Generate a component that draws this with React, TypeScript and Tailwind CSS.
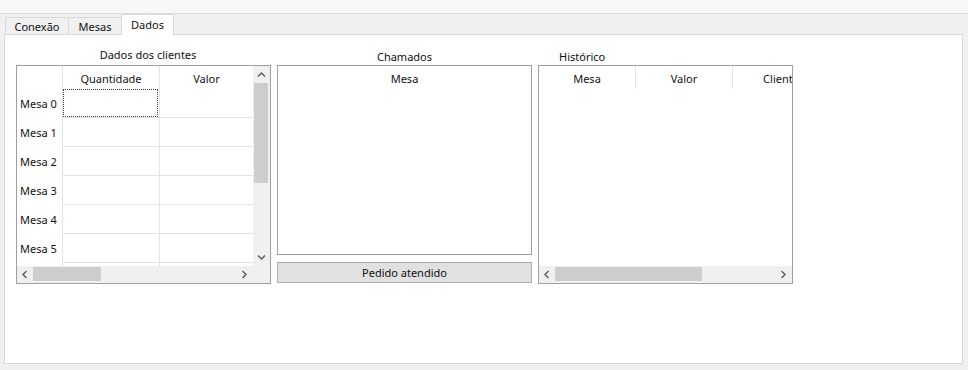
import React from "react";

const Chev = ({ dir }: { dir: "up" | "down" | "left" | "right" }) => {
  const pts: Record<string, string> = {
    up: "1,5.5 4.5,2 8,5.5",
    down: "1,2.5 4.5,6 8,2.5",
    left: "5.5,1 2,4.5 5.5,8",
    right: "2.5,1 6,4.5 2.5,8",
  };
  return (
    <svg width="9" height="9" viewBox="0 0 9 9">
      <polyline points={pts[dir]} fill="none" stroke="#5a5a5a" strokeWidth="1.4" />
    </svg>
  );
};

const HScroll = ({ thumbLeft, thumbWidth }: { thumbLeft: number; thumbWidth: number }) => (
  <div className="relative h-[17px] flex-1 bg-[#f0f0f0] flex items-center justify-between">
    <div className="w-[17px] h-[17px] flex items-center justify-center">
      <Chev dir="left" />
    </div>
    <div
      className="absolute top-[1px] bottom-[2px] bg-[#cdcdcd]"
      style={{ left: thumbLeft, width: thumbWidth }}
    />
    <div className="w-[17px] h-[17px] flex items-center justify-center">
      <Chev dir="right" />
    </div>
  </div>
);

const rows = ["Mesa 0", "Mesa 1", "Mesa 2", "Mesa 3", "Mesa 4", "Mesa 5", "Mesa 6"];

export default function App() {
  return (
    <div className="w-[968px] h-[370px] bg-[#f0f0f0] overflow-hidden text-[11px] text-[#111] font-['Noto_Sans',sans-serif] leading-none">
      {/* top strip */}
      <div className="h-[14px] bg-[#f7f7f7] border-b border-[#dcdcdc]" />
      {/* tabs */}
      <div className="h-[20px] flex items-end pl-[5px]">
        <div className="w-[64px] h-[17px] border-l border-t border-r border-[#d9d9d9] bg-[#f0f0f0] flex items-center justify-center pt-[1px]">
          Conexão
        </div>
        <div className="w-[53px] h-[17px] border-t border-r border-[#d9d9d9] bg-[#f0f0f0] flex items-center justify-center pt-[1px]">
          Mesas
        </div>
        <div className="relative z-10 -ml-px -mb-px w-[53px] h-[21px] border-l border-t border-r border-[#d9d9d9] bg-white flex items-center justify-center pb-[2px]">
          Dados
        </div>
      </div>
      {/* panel */}
      <div className="ml-[4px] w-[959px] h-[330px] bg-white border border-[#d9d9d9] pl-[11px] pt-[11px] flex gap-[6px] items-start">
        {/* left group */}
        <div className="w-[255px] flex flex-col">
          <div className="h-[19px] flex items-center justify-center pl-[9px] pb-[2px]">Dados dos clientes</div>
          <div className="h-[219px] border border-[#a0a0a0] flex flex-col">
            <div className="h-[200px] flex">
              <div className="w-[236px] h-[200px] overflow-hidden flex flex-col">
                <div className="h-[23px] shrink-0 flex">
                  <div className="w-[46px] border-r border-[#e3e3e3]" />
                  <div className="w-[97px] border-r border-[#e3e3e3] flex items-center justify-center pt-[1px]">Quantidade</div>
                  <div className="flex-1 flex items-center justify-center pt-[1px]">Valor</div>
                </div>
                {rows.map((r, i) => (
                  <div key={r} className="h-[29px] shrink-0 flex">
                    <div className="w-[46px] border-r border-[#e3e3e3] flex items-center pl-[3px]">{r}</div>
                    <div className="relative w-[97px] border-r border-b border-[#e3e3e3]">
                      {i === 0 && (
                        <div className="absolute left-0 top-0 right-[1px] bottom-0 border border-dotted border-[#404040]" />
                      )}
                    </div>
                    <div className="flex-1 border-b border-[#e3e3e3]" />
                  </div>
                ))}
              </div>
              <div className="relative w-[17px] h-[200px] bg-[#f0f0f0] flex flex-col justify-between">
                <div className="h-[17px] flex items-center justify-center pt-[2px]">
                  <Chev dir="up" />
                </div>
                <div className="absolute left-[1px] right-[2px] top-[17px] h-[100px] bg-[#cdcdcd]" />
                <div className="h-[17px] flex items-center justify-center">
                  <Chev dir="down" />
                </div>
              </div>
            </div>
            <div className="flex">
              <HScroll thumbLeft={16} thumbWidth={68} />
              <div className="w-[17px] h-[17px] bg-[#f0f0f0]" />
            </div>
          </div>
        </div>
        {/* center group */}
        <div className="w-[255px] flex flex-col">
          <div className="h-[19px] flex items-center justify-center pt-[1px]">Chamados</div>
          <div className="h-[190px] border border-[#a0a0a0] flex flex-col">
            <div className="h-[23px] flex items-center justify-center pt-[1px]">Mesa</div>
          </div>
          <div className="mt-[7px] h-[21px] border border-[#adadad] bg-[#e1e1e1] flex items-center justify-center">
            Pedido atendido
          </div>
        </div>
        {/* right group */}
        <div className="w-[255px] flex flex-col">
          <div className="h-[19px] flex items-center pl-[21px] pt-[1px]">Histórico</div>
          <div className="h-[219px] border border-[#a0a0a0] flex flex-col overflow-hidden">
            <div className="h-[200px] overflow-hidden">
              <div className="h-[23px] flex w-[400px]">
                <div className="w-[97px] border-r border-[#e5e5e5] flex items-center justify-center pt-[1px]">Mesa</div>
                <div className="w-[97px] border-r border-[#e5e5e5] flex items-center justify-center pt-[1px]">Valor</div>
                <div className="w-[97px] border-r border-[#e5e5e5] flex items-center justify-center pt-[1px]">Cliente</div>
              </div>
            </div>
            <div className="flex">
              <HScroll thumbLeft={16} thumbWidth={147} />
            </div>
          </div>
        </div>
      </div>
    </div>
  );
}
